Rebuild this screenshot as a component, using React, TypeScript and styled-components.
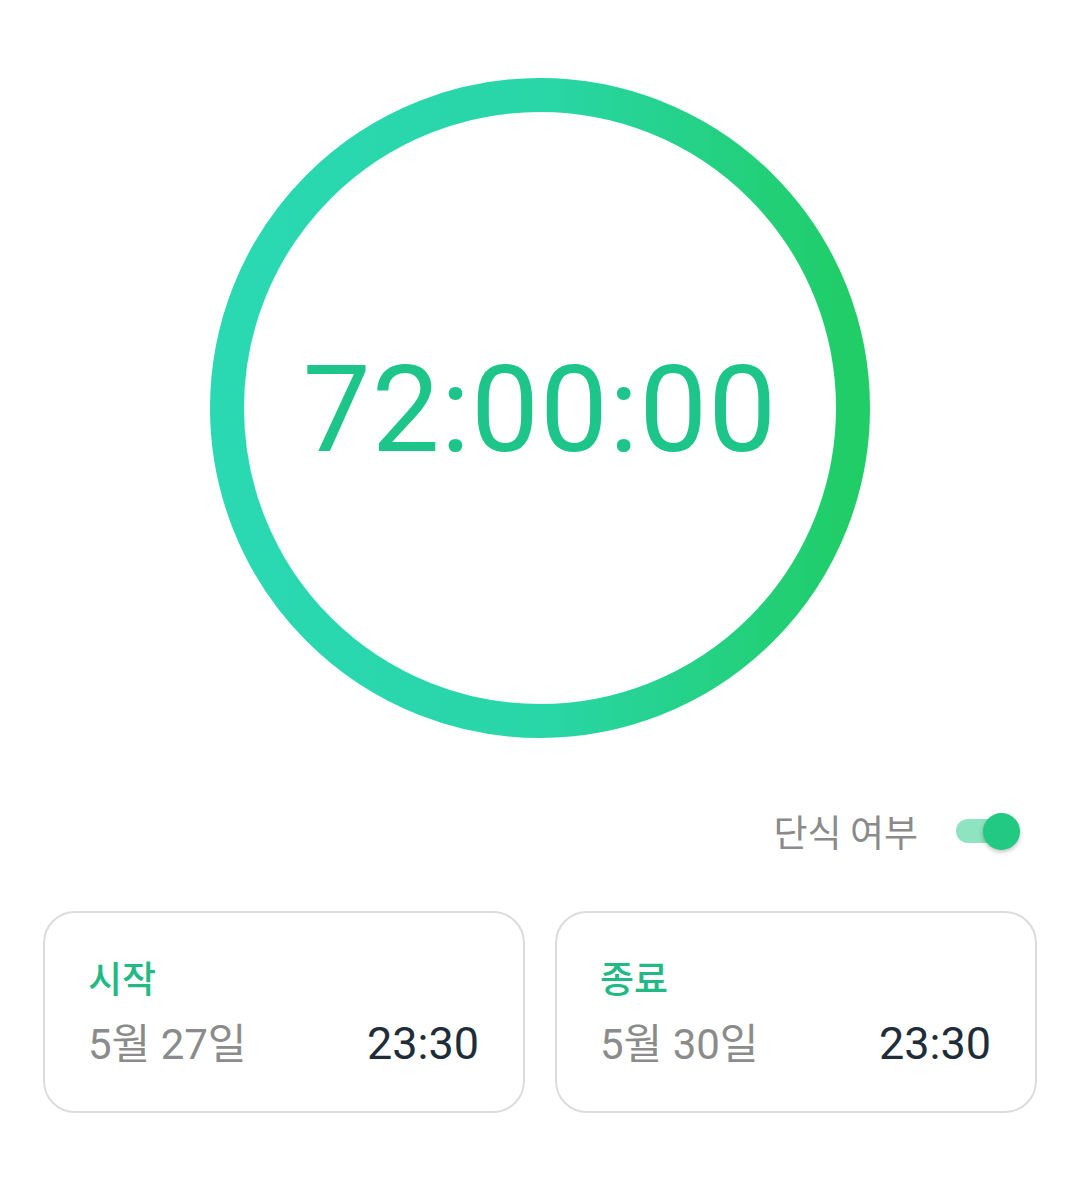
import styled, { createGlobalStyle } from "styled-components";

const GlobalStyle = createGlobalStyle`
  html, body {
    margin: 0;
    padding: 0;
    background: #ffffff;
  }
  body {
    font-family: Roboto, "Noto Sans CJK KR", sans-serif;
  }
`;

const schedule = [
  { label: "시작", date: "5월 27일", time: "23:30" },
  { label: "종료", date: "5월 30일", time: "23:30" },
];

function Ring() {
  return (
    <RingSvg viewBox="0 0 660 660" width={660} height={660}>
      <defs>
        <linearGradient id="ringGrad" x1="0" y1="0" x2="1" y2="0">
          <stop offset="0%" stopColor="#2ad8b2" />
          <stop offset="50%" stopColor="#29d6a8" />
          <stop offset="100%" stopColor="#20cd66" />
        </linearGradient>
      </defs>
      <circle cx={330} cy={330} r={313} fill="none" stroke="url(#ringGrad)" strokeWidth={34} />
    </RingSvg>
  );
}

function App() {
  return (
    <Page>
      <GlobalStyle />
      <Dial>
        <Ring />
        <Timer>72:00:00</Timer>
      </Dial>
      <ToggleRow>
        <ToggleLabel>단식 여부</ToggleLabel>
        <Switch>
          <Thumb />
        </Switch>
      </ToggleRow>
      <Cards>
        {schedule.map((s) => (
          <Card key={s.label}>
            <CardLabel>{s.label}</CardLabel>
            <CardRow>
              <CardDate>{s.date}</CardDate>
              <CardTime>{s.time}</CardTime>
            </CardRow>
          </Card>
        ))}
      </Cards>
    </Page>
  );
}

const Page = styled.div`
  width: 1080px;
  height: 1192px;
  display: flex;
  flex-direction: column;
  align-items: center;
  padding-top: 78px;
  box-sizing: border-box;
`;

const Dial = styled.div`
  position: relative;
  width: 660px;
  height: 660px;
  display: flex;
  align-items: center;
  justify-content: center;
`;

const RingSvg = styled.svg`
  position: absolute;
  inset: 0;
`;

const Timer = styled.div`
  position: relative;
  font-family: Roboto, sans-serif;
  font-size: 121px;
  font-weight: 400;
  color: #1dc58a;
  letter-spacing: 1px;
  line-height: 1;
  margin-top: 4px;
`;

const ToggleRow = styled.div`
  align-self: stretch;
  display: flex;
  align-items: center;
  justify-content: flex-end;
  gap: 38px;
  padding-right: 74px;
  margin-top: 73px;
  height: 40px;
`;

const ToggleLabel = styled.span`
  font-size: 37px;
  font-weight: 400;
  color: #8a8a8a;
  font-family: "Noto Sans CJK KR", sans-serif;
`;

const Switch = styled.div`
  position: relative;
  width: 50px;
  height: 24px;
  border-radius: 12px;
  background: #8ee3c1;
`;

const Thumb = styled.div`
  position: absolute;
  top: 50%;
  right: -14px;
  width: 37px;
  height: 37px;
  margin-top: -18.5px;
  border-radius: 50%;
  background: #22c983;
  box-shadow: 0 2px 4px rgba(0, 0, 0, 0.25);
`;

const Cards = styled.div`
  align-self: stretch;
  display: grid;
  grid-template-columns: 1fr 1fr;
  gap: 30px;
  padding: 0 43px;
  margin-top: 60px;
`;

const Card = styled.div`
  height: 202px;
  border: 2px solid #dcdcdc;
  border-radius: 32px;
  box-sizing: border-box;
  padding: 42px 44px 0 43px;
  display: flex;
  flex-direction: column;
`;

const CardLabel = styled.div`
  font-family: "Noto Sans CJK KR", sans-serif;
  font-size: 37px;
  font-weight: 500;
  color: #23b985;
  line-height: 1.2;
`;

const CardRow = styled.div`
  display: flex;
  justify-content: space-between;
  align-items: baseline;
  margin-top: 18px;
`;

const CardDate = styled.span`
  font-size: 42px;
  color: #8b8b8b;
  line-height: 1.2;
`;

const CardTime = styled.span`
  font-size: 45px;
  font-weight: 400;
  color: #1f2d3a;
  line-height: 1.2;
`;

export default App;
